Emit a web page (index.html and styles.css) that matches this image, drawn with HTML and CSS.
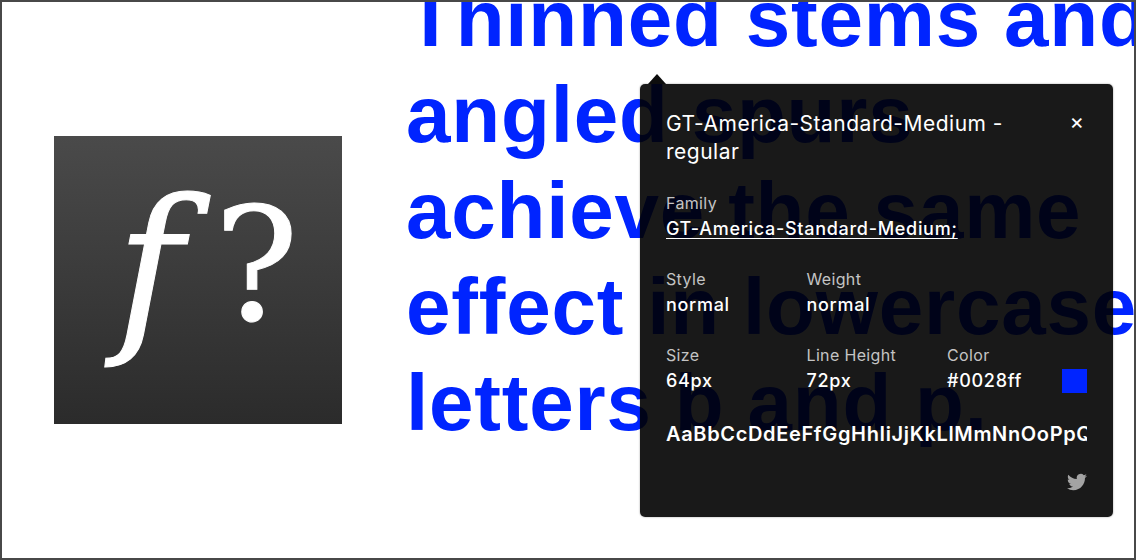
FILE: index.html
```html
<!DOCTYPE html>
<html lang="en">
<head>
  <meta charset="UTF-8">
  <title>Font inspector</title>
  <link rel="stylesheet" href="styles.css">
</head>
<body>
  <div class="frame">
    <div class="logo"><span class="logo-f">f</span><span class="logo-q">?</span></div>
    <h1 class="sample">Thinned stems and<br>angled spurs<br>achieve the same<br>effect in lowercase<br>letters b and p.</h1>

    <div class="popover">
      <div class="popover-head">
        <div class="popover-title">GT-America-Standard-Medium - regular</div>
        <span class="close">&#215;</span>
      </div>
      <div class="field family">
        <div class="label">Family</div>
        <div class="value"><u>GT-America-Standard-Medium;</u></div>
      </div>
      <div class="grid">
        <div class="field">
          <div class="label">Style</div>
          <div class="value">normal</div>
        </div>
        <div class="field">
          <div class="label">Weight</div>
          <div class="value">normal</div>
        </div>
        <div></div>
        <div class="field">
          <div class="label">Size</div>
          <div class="value">64px</div>
        </div>
        <div class="field">
          <div class="label">Line Height</div>
          <div class="value">72px</div>
        </div>
        <div class="field color-field">
          <div class="label">Color</div>
          <div class="value">#0028ff</div>
          <span class="swatch"></span>
        </div>
      </div>
      <div class="alphabet">AaBbCcDdEeFfGgHhIiJjKkLlMmNnOoPpQqRrSsTtUuVvWwXxYyZz</div>
      <div class="popover-foot">
        <svg class="twitter" viewBox="0 0 24 24"><path d="M23.95 4.57a10 10 0 0 1-2.82.77 4.96 4.96 0 0 0 2.16-2.72c-.95.56-2 .96-3.13 1.18a4.92 4.92 0 0 0-8.38 4.49C7.69 8.1 4.07 6.13 1.64 3.16a4.82 4.82 0 0 0-.67 2.48c0 1.71.87 3.21 2.19 4.09a4.9 4.9 0 0 1-2.23-.61v.06a4.92 4.92 0 0 0 3.95 4.83 5 5 0 0 1-2.21.08 4.94 4.94 0 0 0 4.6 3.42 9.87 9.87 0 0 1-6.1 2.11c-.39 0-.78-.03-1.17-.07a14 14 0 0 0 7.56 2.21c9.05 0 14-7.5 14-13.99 0-.21 0-.42-.02-.63A9.94 9.94 0 0 0 24 4.59z"/></svg>
      </div>
    </div>
  </div>
</body>
</html>
```

FILE: styles.css
```css
html, body {
  margin: 0;
  height: 100%;
  overflow: hidden;
  background: #fff;
}
.frame {
  position: relative;
  box-sizing: border-box;
  height: 560px;
  border: 2px solid #484848;
  overflow: hidden;
  display: flex;
  align-items: flex-start;
  padding-left: 52px;
}
.logo {
  flex: none;
  width: 288px;
  height: 288px;
  margin-top: 134px;
  position: relative;
  overflow: hidden;
  background: linear-gradient(#4a4a4a, #2b2b2b);
  color: #fff;
  font-family: "DejaVu Serif", serif;
  -webkit-text-stroke: 1px #fff;
}
.logo-f {
  position: absolute;
  left: 62px;
  top: 20px;
  font-size: 182px;
  line-height: 220px;
  font-style: italic;
}
.logo-q {
  position: absolute;
  left: 160px;
  top: 24px;
  font-size: 158px;
  line-height: 210px;
}
.sample {
  margin: -31px 0 0 64px;
  flex: none;
  white-space: nowrap;
  font-family: "Liberation Sans", sans-serif;
  font-weight: 700;
  font-size: 80px;
  line-height: 96px;
  letter-spacing: 0.8px;
  color: #0024ff;
}
.popover {
  position: absolute;
  left: 638px;
  top: 82px;
  box-sizing: border-box;
  width: 473px;
  height: 433px;
  padding: 26px 26px 0;
  border-radius: 5px;
  background: rgba(0, 0, 0, 0.9);
  box-shadow: 0 0 2px rgba(0, 0, 0, 0.4);
  color: #fff;
  font-family: Inter, sans-serif;
}
.popover::before {
  content: "";
  position: absolute;
  left: 8px;
  top: -10px;
  border-style: solid;
  border-width: 0 9px 10px;
  border-color: transparent transparent #0d0d0d;
}
.popover-head {
  display: flex;
  justify-content: space-between;
  align-items: flex-start;
}
.popover-title {
  width: 350px;
  font-size: 21px;
  line-height: 28px;
  letter-spacing: 0.5px;
}
.close {
  font-size: 22px;
  line-height: 22px;
  margin-right: 3px;
}
.family {
  margin-top: 25px;
}
.label {
  margin-bottom: 1px;
  font-size: 16px;
  line-height: 24px;
  letter-spacing: 0.35px;
  color: #c4c4c4;
}
.value {
  font-size: 18px;
  font-weight: 500;
  line-height: 26px;
  letter-spacing: 0.7px;
}
.value u {
  text-underline-offset: 3px;
}
.grid {
  display: grid;
  grid-template-columns: 140.5px 140.5px 1fr;
  row-gap: 25px;
  margin-top: 25px;
}
.color-field {
  position: relative;
}
.swatch {
  position: absolute;
  right: 0;
  bottom: 1px;
  width: 25px;
  height: 24px;
  background: #0024ff;
}
.alphabet {
  margin-top: 27px;
  font-size: 20px;
  font-weight: 600;
  line-height: 26px;
  letter-spacing: 0.65px;
  white-space: nowrap;
  overflow: hidden;
}
.popover-foot {
  display: flex;
  justify-content: flex-end;
  margin-top: 25px;
}
.twitter {
  width: 20px;
  height: 20px;
  fill: #a3a3a3;
}
```
